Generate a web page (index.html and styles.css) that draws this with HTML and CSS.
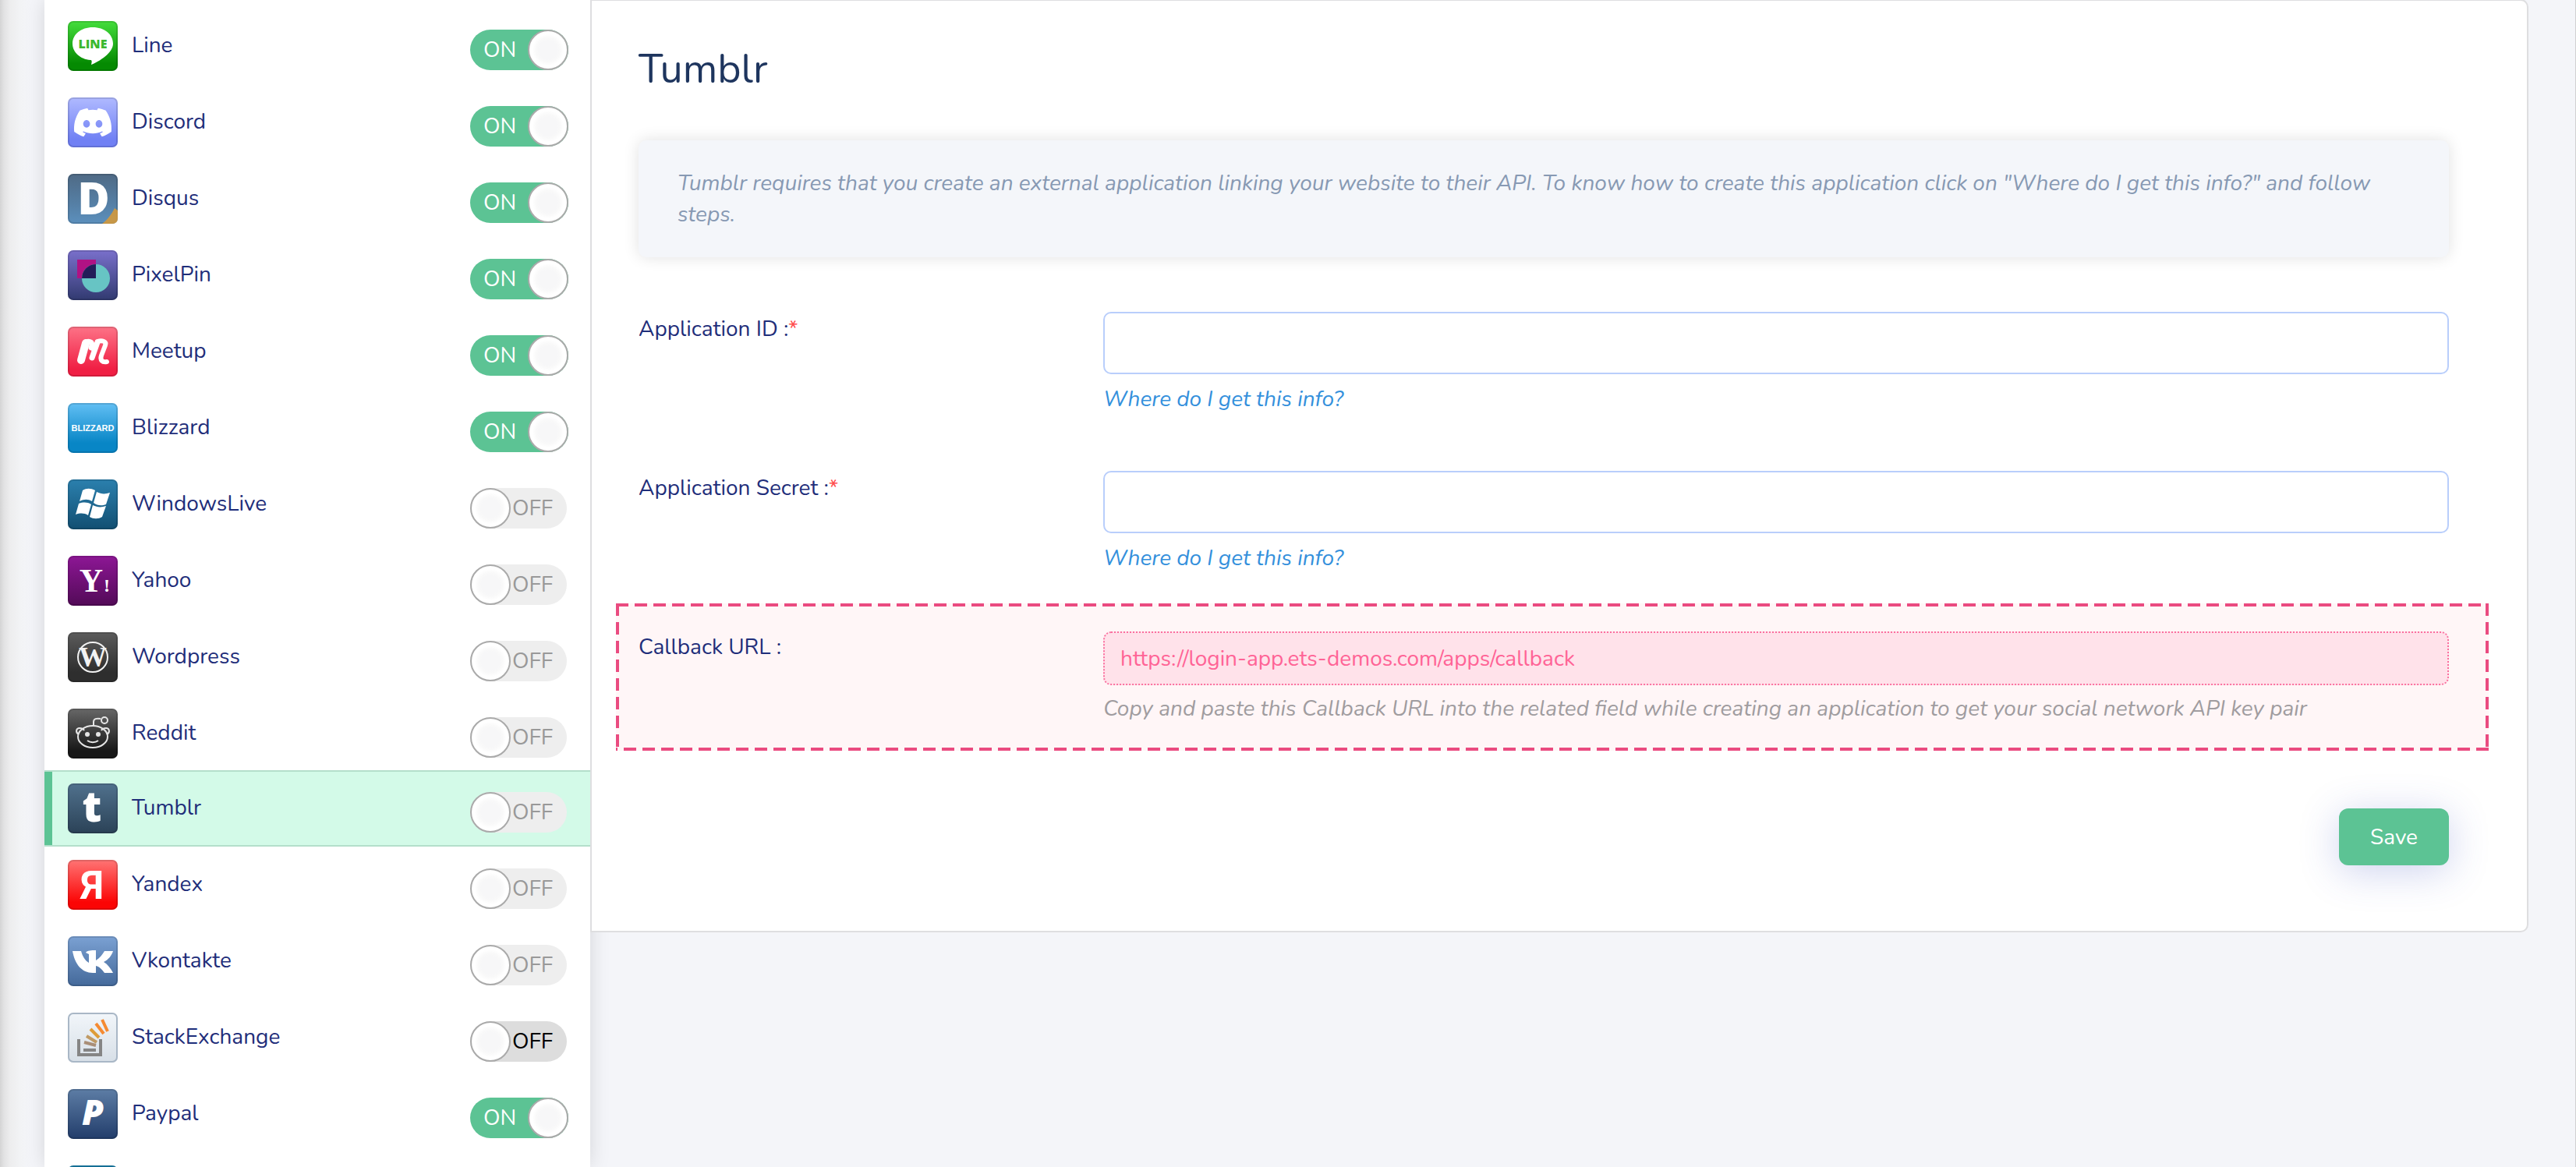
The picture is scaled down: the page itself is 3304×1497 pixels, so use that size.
FILE: index.html
```html
<!DOCTYPE html>
<html lang="en">
<head>
  <meta charset="UTF-8" />
  <meta name="viewport" content="width=device-width, initial-scale=1.0"/>
  <title>Tumblr</title>
  <link rel="stylesheet" href="styles.css">
</head>
<body>
  <div class="page">
    <div class="rail"></div>

    <ul class="networks">
      <li class="network">
        <svg class="icon line" viewBox="0 0 64 64">
          <path d="M32 8C17 8 6 17 6 29c0 11 10 20 23 21 2 0 2 2 1 6 10-4 28-15 28-27C58 17 47 8 32 8z" fill="#fff"/>
          <text x="32" y="35" text-anchor="middle" font-size="16" font-weight="800" fill="#3bb82f">LINE</text>
        </svg>
        <a class="name" href="#">Line</a>
        <label class="switch on"><input type="checkbox" checked><span>ON</span></label>
      </li>
      <li class="network">
        <svg class="icon discord" viewBox="0 0 64 64">
          <path transform="translate(8 8) scale(2)" fill="#fff" d="M20.317 4.37a19.79 19.79 0 0 0-4.885-1.515c-.24.37-.52.88-.687 1.287a18.4 18.4 0 0 0-5.487 0c-.17-.4-.46-.91-.696-1.287a19.74 19.74 0 0 0-4.885 1.515C.533 9.046-.319 13.58.1 18.058c2.084 1.564 4.072 2.479 6.024 3.085.5-.63.93-1.3 1.31-2.021-.653-.27-1.31-.6-1.914-.998l.45-.37c3.928 1.793 8.18 1.793 12.061 0l.45.37c-.6.39-1.26.73-1.92.998.37.72.81 1.39 1.31 2.022 1.96-.607 3.95-1.522 6.033-3.085.5-5.177-.838-9.674-3.587-13.69zM8.02 15.33c-1.183 0-2.157-1.085-2.157-2.418s.955-2.42 2.157-2.42c1.21 0 2.176 1.096 2.157 2.42 0 1.333-.956 2.419-2.157 2.419zm7.975 0c-1.183 0-2.157-1.085-2.157-2.418s.955-2.42 2.157-2.42c1.21 0 2.176 1.096 2.157 2.42 0 1.333-.946 2.419-2.157 2.419z"/>
        </svg>
        <a class="name" href="#">Discord</a>
        <label class="switch on"><input type="checkbox" checked><span>ON</span></label>
      </li>
      <li class="network">
        <svg class="icon disqus" viewBox="0 0 64 64">
          <path d="M44 64c6-4 12-12 16-20l4 3v10q0 7-7 7z" fill="#db9a35" opacity=".85"/>
          <text x="33" y="52" text-anchor="middle" font-size="56" font-weight="800" fill="#fff">D</text>
        </svg>
        <a class="name" href="#">Disqus</a>
        <label class="switch on"><input type="checkbox" checked><span>ON</span></label>
      </li>
      <li class="network">
        <svg class="icon pixelpin" viewBox="0 0 64 64">
          <rect x="12" y="12" width="24" height="24" fill="#b01284"/>
          <circle cx="36" cy="36" r="18" fill="#67c4c4"/>
          <path d="M36 18a18 18 0 0 0-18 18h18z" fill="#231c58"/>
        </svg>
        <a class="name" href="#">PixelPin</a>
        <label class="switch on"><input type="checkbox" checked><span>ON</span></label>
      </li>
      <li class="network">
        <svg class="icon meetup" viewBox="0 0 64 64" fill="none" stroke="#fff" stroke-linecap="round" stroke-linejoin="round">
          <path d="M17 43l6-22" stroke-width="10"/>
          <path d="M23 20c5-2 10 0 7 7M31 40l7-20" stroke-width="7"/>
          <path d="M38 19c6-2 12 0 10 5l-5 13c-2 6 1 9 7 8" stroke-width="6"/>
        </svg>
        <a class="name" href="#">Meetup</a>
        <label class="switch on"><input type="checkbox" checked><span>ON</span></label>
      </li>
      <li class="network">
        <svg class="icon blizzard" viewBox="0 0 64 64">
          <text x="32" y="36" text-anchor="middle" font-size="11" fill="#fff">BLIZZARD</text>
        </svg>
        <a class="name" href="#">Blizzard</a>
        <label class="switch on"><input type="checkbox" checked><span>ON</span></label>
      </li>
      <li class="network">
        <svg class="icon windows" viewBox="0 0 64 64" fill="#fff">
          <path d="M19 14c5-3 10-3 16 0l-4 14c-5-3-10-3-16 0z"/>
          <path d="M37 16c6 3 11 3 17 1l-5 15c-5 2-11 2-16-2z"/>
          <path d="M14 31c6-2 11-2 16 1l-4 14c-5-3-10-3-16-1z"/>
          <path d="M32 33c6 3 11 3 17 1l-5 14c-5 3-11 3-16 0z"/>
        </svg>
        <a class="name" href="#">WindowsLive</a>
        <label class="switch"><input type="checkbox"><span>OFF</span></label>
      </li>
      <li class="network">
        <svg class="icon yahoo" viewBox="0 0 64 64" fill="#fff">
          <text x="30" y="46" text-anchor="middle" font-size="42">Y</text>
          <text x="50" y="46" text-anchor="middle" font-size="24">!</text>
        </svg>
        <a class="name" href="#">Yahoo</a>
        <label class="switch"><input type="checkbox"><span>OFF</span></label>
      </li>
      <li class="network">
        <svg class="icon wordpress" viewBox="0 0 64 64">
          <circle cx="32" cy="32" r="19" fill="none" stroke="#f2f2f2" stroke-width="2"/>
          <text x="32" y="44" text-anchor="middle" font-size="36" fill="#f2f2f2">W</text>
        </svg>
        <a class="name" href="#">Wordpress</a>
        <label class="switch"><input type="checkbox"><span>OFF</span></label>
      </li>
      <li class="network">
        <svg class="icon reddit" viewBox="0 0 64 64" fill="none" stroke="#e6e6e6" stroke-width="2">
          <ellipse cx="32" cy="36" rx="19" ry="14"/>
          <path d="M14 33c-5-3-3-8 1-8 3 0 5 1 6 3M50 33c5-3 3-8-1-8-3 0-5 1-6 3M33 22v-5c0-4 4-5 9-4M25 41c4 3 10 3 14 0"/>
          <circle cx="47" cy="15" r="4"/>
          <circle cx="25" cy="33" r="2" fill="#e6e6e6"/>
          <circle cx="39" cy="33" r="2" fill="#e6e6e6"/>
        </svg>
        <a class="name" href="#">Reddit</a>
        <label class="switch"><input type="checkbox"><span>OFF</span></label>
      </li>
      <li class="network active">
        <svg class="icon tumblr" viewBox="0 0 64 64">
          <text x="31" y="49" text-anchor="middle" font-size="54" font-weight="800" fill="#fff">t</text>
        </svg>
        <a class="name" href="#">Tumblr</a>
        <label class="switch"><input type="checkbox"><span>OFF</span></label>
      </li>
      <li class="network">
        <svg class="icon yandex" viewBox="0 0 64 64">
          <text x="31" y="50" text-anchor="middle" font-size="50" fill="#fff">Я</text>
        </svg>
        <a class="name" href="#">Yandex</a>
        <label class="switch"><input type="checkbox"><span>OFF</span></label>
      </li>
      <li class="network">
        <svg class="icon vk" viewBox="0 0 64 64">
          <path d="M6 19h11c2 7 5 12 10 15V23l-4-2c2-3 7-3 13-3v13c5-3 8-7 11-12h11c-2 6-6 11-12 14 5 3 9 8 12 14H47c-3-4-6-8-11-9v9h-4C18 47 9 36 6 19z" fill="#fff"/>
        </svg>
        <a class="name" href="#">Vkontakte</a>
        <label class="switch"><input type="checkbox"><span>OFF</span></label>
      </li>
      <li class="network">
        <svg class="icon stack" viewBox="0 0 64 64" fill="none" stroke-width="4">
          <path d="M14 34v20h28V34M20 48h16" stroke="#858585"/>
          <path d="M21 38l15 4" stroke="#a98e77"/>
          <path d="M24 30l13 8" stroke="#c09a64"/>
          <path d="M29 21l11 11" stroke="#dd9c38"/>
          <path d="M36 14l10 13M44 9l7 15" stroke="#f58a32"/>
        </svg>
        <a class="name" href="#">StackExchange</a>
        <label class="switch hover"><input type="checkbox"><span>OFF</span></label>
      </li>
      <li class="network">
        <svg class="icon paypal" viewBox="0 0 64 64">
          <text x="32" y="46" text-anchor="middle" font-size="45" font-weight="800" font-style="italic" fill="#fff">P</text>
        </svg>
        <a class="name" href="#">Paypal</a>
        <label class="switch on"><input type="checkbox" checked><span>ON</span></label>
      </li>
      <li class="network">
        <svg class="icon next" viewBox="0 0 64 64"></svg>
      </li>
    </ul>

    <main class="content">
      <form class="panel">
        <h1>Tumblr</h1>
        <p class="info">Tumblr requires that you create an external application linking your website to their API. To know how to create this application click on "Where do I get this info?" and follow steps.</p>

        <div class="field">
          <label for="app-id">Application ID :<span class="required">*</span></label>
          <div>
            <input type="text" id="app-id" />
            <a class="help" href="#">Where do I get this info?</a>
          </div>
        </div>

        <div class="field">
          <label for="app-secret">Application Secret :<span class="required">*</span></label>
          <div>
            <input type="text" id="app-secret" />
            <a class="help" href="#">Where do I get this info?</a>
          </div>
        </div>

        <div class="field callback">
          <label for="callback-url">Callback URL :</label>
          <div>
            <input type="text" id="callback-url" value="https://login-app.ets-demos.com/apps/callback" readonly />
            <p class="help">Copy and paste this Callback URL into the related field while creating an application to get your social network API key pair</p>
          </div>
        </div>

        <button type="button" class="save">Save</button>
      </form>
    </main>
  </div>
</body>
</html>
```
FILE: styles.css
```css
* {
  box-sizing: border-box;
}

body {
  margin: 0;
  font-family: "Nunito", "Open Sans", sans-serif;
  font-size: 28px;
  line-height: 40px;
  color: #1f2e7a;
  background-color: #f4f5f9;
}

a {
  text-decoration: none;
}

.page {
  display: flex;
  height: 100vh;
  overflow: hidden;
  border-right: 1px solid #d0d0d2;
}

.rail {
  flex: none;
  width: 57px;
  background: linear-gradient(90deg, #d4d4d4, #e2e2e3 5px, #ededee 13px, #f2f3f5 26px, #f4f5f9 40px);
}

/* Network list */
.networks {
  flex: none;
  width: 700px;
  margin: 0;
  padding: 10px 0 0;
  list-style: none;
  background-color: #fff;
  box-shadow: 0 0 25px rgba(0, 0, 0, 0.13);
}

.network {
  display: flex;
  align-items: flex-start;
  padding: 15px 28px 15px 30px;
  border-top: 2px solid transparent;
  border-bottom: 2px solid transparent;
}

.network.active {
  margin-top: -2px;
  background-color: #d3fae8;
  border-color: #b4dfcb;
  box-shadow: inset 10px 0 #5cc394;
}

.name {
  flex: 1;
  padding-left: 18px;
  line-height: 62px;
  color: #1f2e7a;
}

.icon {
  flex: none;
  width: 64px;
  height: 64px;
  overflow: visible;
  border-radius: 7px;
  box-shadow: inset 0 0 0 2px rgba(0, 0, 0, 0.12);
}

.icon text {
  font-family: "Open Sans", sans-serif;
}

.line { background: linear-gradient(#44de3c, #058a02 85%); }
.discord { background: linear-gradient(#b0baff, #7080f4 85%); }
.disqus { background: linear-gradient(#4f6a85, #557fa5 60%, #5c90bd); }
.pixelpin { background: linear-gradient(#7a70cc, #313a70); }
.meetup { background: linear-gradient(#fd7387, #f01f44 85%); }
.blizzard { background: linear-gradient(#62bff4, #0886c6 80%); }
.windows { background: linear-gradient(#2b80ae, #124f72); }
.yahoo { background: linear-gradient(#8d1795, #520a57); }
.wordpress { background: linear-gradient(#5c5c5c, #2e2e2e 80%); }
.reddit { background: linear-gradient(#686868, #171717 85%); }
.tumblr { background: linear-gradient(#50718d, #2b4257); }
.yandex { background: linear-gradient(#ff7474, #fb0505 85%); }
.vk { background: linear-gradient(#7ba1d3, #44699a); }
.stack { background: linear-gradient(#f2f6fa, #d7dfe7); box-shadow: inset 0 0 0 2px #a9b7c6; }
.paypal { background: linear-gradient(#5d7da5, #223d6b); }
.next { background: linear-gradient(#1a80ab, #14688c); }

.icon.blizzard text {
  font-family: "Liberation Sans", sans-serif;
  font-weight: bold;
}

.icon.yandex text {
  font-family: "Roboto", sans-serif;
  font-weight: bold;
}

.icon.yahoo text,
.icon.wordpress text {
  font-family: "Liberation Serif", serif;
  font-weight: bold;
}

/* ON / OFF switch */
.switch {
  display: flex;
  align-items: center;
  width: 124px;
  height: 52px;
  margin: 11px 2px 0 0;
  border-radius: 26px;
  background-color: #eee;
  color: #999;
  cursor: pointer;
}

.switch input {
  appearance: none;
  flex: none;
  width: 52px;
  height: 52px;
  margin: 0;
  border: 2px solid #aaa;
  border-radius: 50%;
  background: radial-gradient(#f7f7f8 35%, #f9f9f9 45%, #fff 60%);
}

.switch span {
  flex: 1;
  padding-left: 2px;
  line-height: 50px;
}

.switch.on {
  flex-direction: row-reverse;
  width: 126px;
  margin-right: 0;
  background-color: #5cc394;
  color: #fff;
}

.switch.on span {
  padding-left: 17px;
}

.switch.hover {
  background-color: #ddd;
  color: #000;
}

/* Settings panel */
.content {
  flex: 1;
  padding-right: 60px;
}

.panel {
  display: flex;
  flex-direction: column;
  position: relative;
  margin-top: -1px;
  padding: 58px 100px 84px 60px;
  background-color: #fff;
  border: 2px solid #dedee0;
  border-radius: 0 10px 10px 0;
}

.panel h1 {
  margin: 0 0 61px;
  font-size: 52px;
  font-weight: normal;
  line-height: 60px;
  color: #1e355e;
}

.info {
  margin: 0 0 70px;
  padding: 35px 60px 35px 50px;
  border-radius: 10px;
  background-color: #f4f6fa;
  box-shadow: 0 0 20px rgba(0, 0, 0, 0.12);
  color: #8799b3;
  font-style: italic;
}

.field {
  display: grid;
  grid-template-columns: 596px 1fr;
  margin-bottom: 72px;
}

.field label {
  padding-top: 2px;
}

.required {
  color: #ff4d4d;
}

.field input {
  display: block;
  width: 100%;
  height: 80px;
  padding: 0 20px;
  border: 2px solid #b9cefb;
  border-radius: 10px;
  background-color: #fff;
  font: inherit;
  outline: none;
}

.help {
  display: block;
  margin: 12px 0 0;
  font-style: italic;
  color: #3490dc;
}

/* highlighted row with a long-dash frame */
.callback {
  margin: -34px -51px 74px -29px;
  padding: 36px 51px 34px 29px;
  background-color: #fff6f7;
  background-image:
    repeating-linear-gradient(90deg, #ea4b80 0 16px, transparent 16px 24px),
    repeating-linear-gradient(270deg, #ea4b80 0 16px, transparent 16px 24px),
    repeating-linear-gradient(#ea4b80 0 16px, transparent 16px 24px),
    repeating-linear-gradient(#ea4b80 0 16px, transparent 16px 24px);
  background-size: 100% 4px, 100% 4px, 4px 100%, 4px 100%;
  background-position: left top, left bottom, left top, right top;
  background-repeat: no-repeat;
}

.callback label {
  padding-top: 0;
}

.callback input {
  height: 69px;
  border: 2px dotted #fa709f;
  background-color: #ffe2ea;
  color: #ff6496;
}

.callback .help {
  margin-top: 10px;
  color: #a09c9f;
}

.save {
  align-self: flex-end;
  height: 73px;
  padding: 0 40px;
  border: none;
  border-radius: 12px;
  background-color: #5cc394;
  box-shadow: 0 8px 50px rgba(60, 80, 190, 0.25);
  color: #fff;
  font: inherit;
  cursor: pointer;
}
```
